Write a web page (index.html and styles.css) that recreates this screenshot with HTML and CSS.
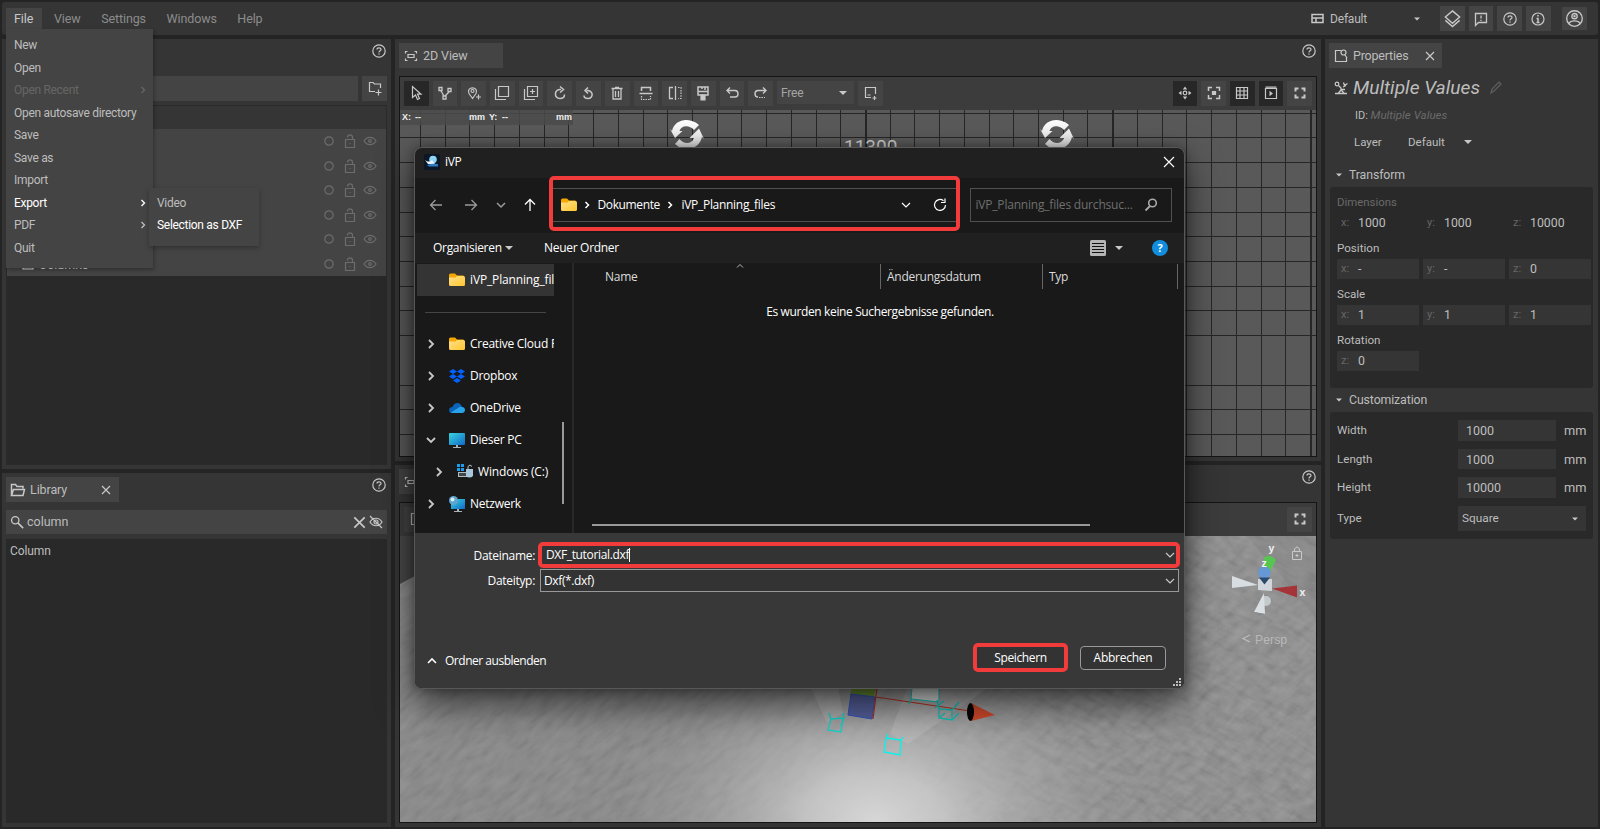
FILE: index.html
```html
<!DOCTYPE html>
<html lang="de">
<head>
<meta charset="utf-8">
<title>iVP</title>
<link rel="stylesheet" href="styles.css">
</head>
<body>
<svg class="defs" width="0" height="0">
  <symbol id="help" viewBox="0 0 16 16"><circle cx="8" cy="8" r="6.2"/><path d="M6 6.6C6 4.2 10 4.2 10 6.5C10 7.9 8 7.8 8 9.4M8 10.6v1.2"/></symbol>
  <symbol id="close" viewBox="0 0 16 16"><path d="M4 4l8 8M12 4l-8 8"/></symbol>
  <symbol id="circle" viewBox="0 0 16 16"><circle cx="8" cy="8" r="4.2"/></symbol>
  <symbol id="lock" viewBox="0 0 16 16"><path d="M3.5 6.5h9v8h-9zM5.5 4.5C5.5 1 10.500 1 10.500 4.500V6.500M7.500 10.500h1"/></symbol>
  <symbol id="eye" viewBox="0 0 16 16"><path d="M2 8C5 3.200 11 3.200 14 8C11 12.800 5 12.800 2 8z"/><circle cx="8" cy="8" r="1.300"/></symbol>
  <symbol id="full" viewBox="0 0 16 16"><path stroke-width="2" d="M3.500 6.500v-3h3M9.500 3.500h3v3M12.500 9.500v3h-3M6.500 12.500h-3v-3"/></symbol>
  <symbol id="scan" viewBox="0 0 16 16"><path d="M2.500 5.500v-2h2M11.500 3.500h2v2M13.500 10.500v2h-2M4.500 12.500h-2v-2M5 6.500h6v3H5z"/></symbol>
  <symbol id="right" viewBox="0 0 16 16"><path d="M6 4l4 4-4 4"/></symbol>
  <symbol id="down" viewBox="0 0 16 16"><path d="M4 6l4 4 4-4"/></symbol>
  <symbol id="up" viewBox="0 0 16 16"><path d="M4 10l4-4 4 4"/></symbol>
  <symbol id="tri" viewBox="0 0 16 16"><path d="M4 6h8l-4 4z" fill="currentColor" stroke="none"/></symbol>
  <symbol id="folder" viewBox="0 0 16 16"><path d="M0 3q0-1.500 1.500-1.500H6L8 3.500h6.500V7H0z" fill="#f5a800" stroke="none"/><path d="M0 5.500h6.500L8 4h6.500Q16 4 16 5.500v7q0 1.500-1.500 1.500h-13Q0 14 0 12.500z" fill="url(#fg)" stroke="none"/></symbol>
  <symbol id="sync" viewBox="0 0 34 32"><path fill="url(#sg)" stroke="none" d="M2 12C4 3 13 -1 22 2Q26 3 29 6L24 11C19 5.500 11 6.500 9.500 12L12.500 12 5 19 0 10zM32 18C30 27 21 32 12 29Q8 28 5 25L9.500 20C14 26 22 25 24 19L19.500 19 29 9.500 34 20z"/></symbol>
  <linearGradient id="fg" x1="0" y1="0" x2="1" y2="1"><stop stop-color="#ffe08a"/><stop offset="1" stop-color="#ffc62e"/></linearGradient>
  <linearGradient id="sg" x1="0" y1="0" x2="0" y2="1"><stop stop-color="#fff"/><stop offset="1" stop-color="#d8d8d8"/></linearGradient>
  <linearGradient id="pc" x1="0" y1="0" x2="1" y2="1"><stop stop-color="#37d5dd"/><stop offset="1" stop-color="#1169c9"/></linearGradient>
</svg>

<header class="topbar">
  <nav class="menus"><span class="menu-open">File</span><span>View</span><span>Settings</span><span>Windows</span><span>Help</span></nav>
  <div class="topright">
    <svg class="ic i13" viewBox="0 0 13 13"><path d="M1 2.500h11v8H1zM1 6h11M5 6v4.500" stroke-width="1.500"/></svg>
    <span class="layout-name">Default</span>
    <svg class="ic i12 lay-arrow"><use href="#tri"/></svg>
    <span class="btn"><svg class="ic i19" viewBox="0 0 20 20"><path stroke-width="1.500" d="M10 2l7.500 6.500L10 15 2.500 8.500zM2.500 12L10 18.500 17.500 12"/></svg></span>
    <span class="btn"><svg class="ic" viewBox="0 0 16 16"><path d="M2.500 2.500h11v9h-8l-3 3zM8 4.500v3M8 8.700v1.300" stroke-width="1.300"/></svg></span>
    <span class="btn"><svg class="ic"><use href="#help"/></svg></span>
    <span class="btn"><svg class="ic" viewBox="0 0 16 16"><circle cx="8" cy="8" r="6"/><path d="M8 4v1.500M6.500 7.500H8V11M6.500 11.500h3" stroke-width="1.500"/></svg></span>
    <span class="btn user"><svg class="ic i19" viewBox="0 0 20 20"><g stroke-width="1.400"><circle cx="10" cy="10" r="8.200"/><circle cx="10" cy="7.500" r="2.800"/><circle cx="10" cy="7.500" r=".6"/><path d="M4 15.500C6 11.500 14 11.500 16 15.500"/></g></svg></span>
  </div>
</header>

<main class="main">
  <div class="col left">
    <section class="panel hier">
      <div class="tabs"><span></span><svg class="ic help"><use href="#help"/></svg></div>
      <div class="searchrow"><div class="field"></div><span class="btn"><svg class="ic" viewBox="0 0 16 16"><path d="M8 11.500H2.500v-9H6L7.500 4h6v4M11.500 9.500v6M8.500 12.500h6"/></svg></span></div>
      <div class="tree" id="tree"></div>
    </section>
    <section class="panel lib">
      <div class="tabs"><div class="tab libtab"><svg class="ic" viewBox="0 0 16 16"><path d="M1.500 13.500v-11h4l1.500 2h6v2M1.500 13.500l2-6h11l-1.500 6z" stroke-width="1.500"/></svg><span>Library</span><svg class="ic tabx"><use href="#close"/></svg></div><svg class="ic help"><use href="#help"/></svg></div>
      <div class="libsearch"><svg class="ic i14" viewBox="0 0 16 16"><circle cx="6" cy="6" r="4.200" stroke-width="1.500"/><path d="M9 9l6 6" stroke-width="1.800"/></svg><span>column</span><svg class="ic xbold" viewBox="0 0 18 18"><path d="M3.500 3.500l11 11M14.500 3.500l-11 11"/></svg><svg class="ic" viewBox="0 0 16 16"><path d="M2 8C5 3 11 3 14 8C11 13 5 13 2 8zM2 2l12 12"/><circle cx="8" cy="8" r="2"/></svg></div>
      <div class="liblist">Column</div>
    </section>
  </div>

  <div class="col center">
    <section class="panel v2d">
      <div class="tabs"><div class="tab viewtab"><svg class="ic"><use href="#scan"/></svg><span>2D View</span></div><svg class="ic help"><use href="#help"/></svg></div>
      <div class="view">
        <div class="tools">
          <span class="btn on"><svg class="ic" viewBox="0 0 16 16"><path d="M4.500 1.500v11l3-2.500 2 4.500 2-1-2-4.300h3.500z"/></svg></span>
          <span class="btn"><svg class="ic" viewBox="0 0 16 16"><path d="M2 2.500h3v3H2zM11 3.500h3v3h-3zM6 11h3v3H6zM4 6l3 5M12 7l-4 4" stroke-width="1.300"/></svg></span>
          <span class="btn"><svg class="ic" viewBox="0 0 16 16"><path d="M6.500 13.500L3 8.500C-.5 1 13.500 1 10 8.500zM12.500 9.500v5M10 12h5"/><circle cx="6.500" cy="6" r="1.500"/></svg></span>
          <span class="btn"><svg class="ic" viewBox="0 0 16 16"><path d="M4.500 1.500h10v10h-10zM1.500 4v10.500H12"/></svg></span>
          <span class="btn"><svg class="ic" viewBox="0 0 16 16"><path d="M4.500 1.500h10v10h-10zM1.500 4v10.500H12M9.500 4v5M7 6.500h5"/></svg></span>
          <span class="btn"><svg class="ic" viewBox="0 0 16 16"><path d="M9 4.500C2 3.500 1.500 13.500 8 13.500C11 13.500 12.500 11.500 12.500 9.500M8 1.500l3.500 3L8 7.500" stroke-width="1.500"/></svg></span>
          <span class="btn"><svg class="ic" viewBox="0 0 16 16"><path d="M6.500 5.500C14 5 13.500 13.500 8 13.500C5 13.500 4 12 4 10.500M8 2.500l-3 3 3 3" stroke-width="1.500"/></svg></span>
          <span class="btn"><svg class="ic" viewBox="0 0 16 16"><path d="M2.500 3.500h11M6 2.500h4M4 4v10h8V4M6.500 6v6M9.500 6v6" stroke-width="1.300"/></svg></span>
          <span class="btn"><svg class="ic" viewBox="0 0 16 16"><path d="M3.500 6V2.500h9V6M1.500 8.500h13" stroke-width="1.500"/><path d="M3.500 11v3.500h9V11" stroke-dasharray="1.500 1"/></svg></span>
          <span class="btn"><svg class="ic" viewBox="0 0 16 16"><path d="M6 2.500H2.500v11H6M8.500 1v14" stroke-width="1.300"/><path d="M11 2.500h3v11h-3" stroke-dasharray="1.500 1.200"/></svg></span>
          <span class="btn"><svg class="ic" viewBox="0 0 16 16"><path d="M3 2v8h10V2zM3 6.500h10M7 2v2M10 2v3" stroke-width="1.500"/><path d="M6 10h4v5H6z" fill="currentColor"/></svg></span>
          <span class="btn"><svg class="ic" viewBox="0 0 16 16"><path d="M3 5.500h8C15 5.500 15 12 11 12H6M6 2.500l-3 3 3 3" stroke-width="1.400"/></svg></span>
          <span class="btn"><svg class="ic" viewBox="0 0 16 16"><path d="M13 5.500H5C1 5.500 1 12 5 12M10 2.500l3 3-3 3" stroke-width="1.400"/><path d="M6 12.500h6" stroke-dasharray="1.500 1"/></svg></span>
          <span class="select">Free<svg class="ic"><use href="#tri"/></svg></span>
          <span class="btn"><svg class="ic" viewBox="0 0 16 16"><path d="M9 12.500H3.500v-10h10V9M5.500 10h3M12.500 11v4M10.500 13h4"/></svg></span>
          <span class="spacer"></span>
          <span class="btn on"><svg class="ic" viewBox="0 0 16 16"><circle cx="8" cy="8" r="1.800"/><path fill="currentColor" stroke="none" d="M8 1.500L10.200 4.500H5.800zM8 14.500l2.200-3H5.800zM1.500 8l3-2.200v4.400zM14.500 8l-3-2.200v4.400z"/></svg></span>
          <span class="btn"><svg class="ic" viewBox="0 0 16 16"><path d="M2.500 6V2.500H6M10 2.500h3.500V6M13.500 10v3.500H10M6 13.500H2.500V10" stroke-width="1.500"/><path d="M6.500 6.500h3v3h-3z" fill="currentColor"/></svg></span>
          <span class="btn on"><svg class="ic" viewBox="0 0 16 16"><path d="M2.500 2.500h11v11h-11zM2.500 6h11M2.500 10h11M6 2.500v11M10 2.500v11" stroke-width="1.200"/></svg></span>
          <span class="btn on"><svg class="ic" viewBox="0 0 16 16"><path d="M2.500 3.500h11v10h-11zM2.500 2.200h11"/><path d="M6.500 5.800l3.500 2.700-3.500 2.700z" fill="currentColor" stroke="none"/></svg></span>
          <span class="btn"><svg class="ic"><use href="#full"/></svg></span>
        </div>
        <div class="canvas2d">
          <svg class="grid" id="grid" width="916" height="346"></svg>
          <div class="coords"><span>X:</span><span>--</span><span>mm</span><span>Y:</span><span>--</span><span>mm</span></div>
          <svg class="sync s1"><use href="#sync"/></svg>
          <svg class="sync s2"><use href="#sync"/></svg>
          <span class="measure">11300</span>
        </div>
      </div>
    </section>
    <section class="panel v3d">
      <div class="tabs"><div class="tab viewtab"><svg class="ic"><use href="#scan"/></svg><span>3D View</span></div><svg class="ic help"><use href="#help"/></svg></div>
      <div class="view">
        <div class="tools"><span class="btn"><svg class="ic" viewBox="0 0 16 16"><path d="M3.500 2.500h9v11h-9zM6 8h4"/></svg></span><span class="spacer"></span><span class="btn"><svg class="ic"><use href="#full"/></svg></span></div>
        <svg class="scene" viewBox="400 536 916 286" width="916" height="286">
          <defs>
            <filter id="noise" x="0" y="0" width="1" height="1"><feTurbulence type="fractalNoise" baseFrequency=".05 .15" numOctaves="4" seed="4"/><feColorMatrix values="1 0 0 0 0  1 0 0 0 0  1 0 0 0 0  0 0 0 0 1"/></filter>
            <radialGradient id="glow" gradientUnits="userSpaceOnUse" cx="0" cy="0" r="1" gradientTransform="translate(875 820) scale(270 185)"><stop stop-color="#d6d6d6"/><stop offset=".25" stop-color="#cdcdcd" stop-opacity=".85"/><stop offset=".6" stop-color="#b4b4b4" stop-opacity=".45"/><stop offset="1" stop-color="#999" stop-opacity="0"/></radialGradient>
            <linearGradient id="fade" x1="0" x2="1" y1="0" y2="0"><stop offset=".35" stop-color="#fff" stop-opacity="0"/><stop offset=".65" stop-color="#fff"/></linearGradient>
            <mask id="rightside"><rect x="400" y="536" width="916" height="286" fill="url(#fade)"/></mask>
          </defs>
          <rect x="400" y="536" width="916" height="286" fill="#858485"/>
          <g opacity=".13"><rect x="100" y="300" width="1100" height="900" filter="url(#noise)" transform="rotate(-40 650 680)"/></g>
          <g opacity=".13" mask="url(#rightside)"><rect x="700" y="200" width="900" height="900" filter="url(#noise)" transform="rotate(28 1150 680)"/></g>
          <rect x="400" y="536" width="916" height="286" fill="url(#glow)"/>
          <path d="M400 536h90l-90 48z" fill="#484848"/>
          <g fill="#d8d8d8" fill-opacity=".22"><path d="M811 688h27l5 25-16 10z"/><path d="M907 688h81l-80 56-18-10z"/></g>
          <path d="M852 688h24l-2 9-24-3z" fill="#6f9436"/><path d="M851 694l24 3-3 22-24-4z" fill="#55609a" stroke="#2f55c4"/><path d="M877 688l-4 31M876 697l94 14" stroke="#b8321f" fill="none" stroke-width="1.200"/>
          <path d="M912 688h27v14l-28-3z" fill="#e0e2e2" stroke="#14c4bf"/>
          <g fill="none" stroke-width="1.300"><path stroke="#12d4ca" d="M829 713l2 6 12-1-2 14-13-2 3-11M843 713l1 5-3 8"/><path stroke="#00f6ee" d="M888 734l-2 5-2 13 16 3 1-15-15-2M901 740l2-3"/><path stroke="#10c4bc" d="M911 699l-2 5M937 700l2 9 13 1 7-8M939 709v9l13 2v-11M952 720l7-7M935 708l9-7M939 718l6-5"/></g>
          <path d="M971 703l24 12-24 6z" fill="#d14a2b"/><ellipse cx="970.500" cy="712" rx="3.500" ry="9" fill="#050303"/>
          <g stroke="none"><path d="M1264 557q8-3 12 3l-6 12-6-3z" fill="#57c552"/><path d="M1232 576l26 9-26 3z" fill="#d7dde1"/><circle cx="1266" cy="601" r="5" fill="#c4c9cc"/><path d="M1264 593l-10 19 11 2z" fill="#d9dfe2"/><path d="M1254 612l11 2-5 1.500z" fill="#828a8e"/><path d="M1258 579h14v12l-14-1z" fill="#d0d6db"/><path d="M1272 588.500l25-3v12z" fill="#a53438"/><circle cx="1264.300" cy="572.500" r="6.300" fill="#6598d5"/><path d="M1259 577.500h11l-5.500 7z" fill="#2b4a6c"/></g>
          <g fill="#f2f2f2" font-family="Liberation Sans" font-weight="bold" font-size="10.500"><text x="1268.500" y="552">y</text><text x="1261.500" y="567">z</text><text x="1299.500" y="596">x</text></g>
          <path d="M1292.500 551.500h9v8h-9zM1294.500 551v-2q2.500-4 5 0v2M1295.500 555.500h3M1297 554v3" fill="none" stroke="#c9c9c9"/>
          <path d="M1250 635l-7 3.500 7 3.500" fill="none" stroke="#bdbdbd" stroke-width="1.300"/><text x="1255" y="644" fill="#b9b9b9" font-family="Liberation Sans" font-size="12.300">Persp</text>
        </svg>
      </div>
    </section>
  </div>

  <section class="panel props">
    <div class="tabs"><div class="tab proptab"><svg class="ic" viewBox="0 0 16 16"><path d="M8 2.500H2.500v11h11V9M12 7l2 3"/><circle cx="10.500" cy="4.500" r="2.500"/></svg><span>Properties</span><svg class="ic tabx"><use href="#close"/></svg></div></div>
    <div class="ptitle"><svg class="ic i14" viewBox="0 0 14 14"><path d="M1 12.500h12M4.500 12L7 9M10 12L7 9V7L4.500 4.500M9 6l3-1.500M9.500 1.500l1 3 3-2M7 8.500h4" stroke-width="1.300"/><circle cx="3" cy="3" r="1.800"/></svg><i>Multiple Values</i><svg class="ic pencil" viewBox="0 0 16 16"><path d="M3 13l1-4 7-7 2 2-7 7z"/></svg></div>
    <div class="pid">ID: <i>Multiple Values</i></div>
    <div class="player"><span>Layer</span><span>Default</span><svg class="ic"><use href="#tri"/></svg></div>
    <div class="phead"><svg class="ic i12"><use href="#tri"/></svg>Transform</div>
    <div class="box transform">
      <div class="lab dim">Dimensions</div>
      <div class="trio plain"><div><b>x:</b>1000</div><div><b>y:</b>1000</div><div><b>z:</b>10000</div></div>
      <div class="lab">Position</div>
      <div class="trio"><div><b>x:</b>-</div><div><b>y:</b>-</div><div><b>z:</b>0</div></div>
      <div class="lab">Scale</div>
      <div class="trio"><div><b>x:</b>1</div><div><b>y:</b>1</div><div><b>z:</b>1</div></div>
      <div class="lab">Rotation</div>
      <div class="trio"><div><b>z:</b>0</div></div>
    </div>
    <div class="phead ch"><svg class="ic i12"><use href="#tri"/></svg>Customization</div>
    <div class="box custom">
      <div class="crow"><span>Width</span><div>1000</div><em>mm</em></div>
      <div class="crow"><span>Length</span><div>1000</div><em>mm</em></div>
      <div class="crow"><span>Height</span><div>10000</div><em>mm</em></div>
      <div class="crow type"><span>Type</span><div>Square<svg class="ic i12"><use href="#tri"/></svg></div></div>
    </div>
  </section>
</main>

<div class="filemenu">
  <div>New</div><div>Open</div><div class="off">Open Recent<svg class="ic i12"><use href="#right"/></svg></div><div>Open autosave directory</div><div>Save</div><div>Save as</div><div>Import</div><div class="hot">Export<svg class="ic i12"><use href="#right"/></svg></div><div>PDF<svg class="ic i12"><use href="#right"/></svg></div><div>Quit</div>
</div>
<div class="submenu"><div>Video</div><div class="hot">Selection as DXF</div></div>

<div class="dialog">
  <div class="dtitle"><svg width="16" height="16" viewBox="0 0 16 16"><rect width="16" height="16" rx="2" fill="#0b1626"/><circle cx="9" cy="5.500" r="3.800" fill="#8ed4f5"/><path d="M1 6q4 3 7 0l3 4H4z" fill="#e6f4fb"/><path d="M3 11q5-2 11-1v2.500H5z" fill="#2f7ac0"/></svg><span>iVP</span><svg class="ic dx"><use href="#close"/></svg></div>
  <div class="dnav">
    <svg class="ic dim" viewBox="0 0 16 16"><path d="M14 8H2.500M7.500 3l-5 5 5 5" stroke-width="1.300"/></svg>
    <svg class="ic dim" viewBox="0 0 16 16"><path d="M2 8h11.500M8.500 3l5 5-5 5" stroke-width="1.300"/></svg>
    <svg class="ic dim"><use href="#down"/></svg>
    <svg class="ic white" viewBox="0 0 16 16"><path d="M8 14V2.500M3 7.500l5-5 5 5" stroke-width="1.300"/></svg>
    <div class="mark addr"><div class="addrin"><svg width="16" height="16"><use href="#folder"/></svg><svg class="ic i12 white bold"><use href="#right"/></svg><span class="a1">Dokumente</span><svg class="ic i12 white bold"><use href="#right"/></svg><span class="a2">iVP_Planning_files</span><svg class="ic white ad"><use href="#down"/></svg><svg class="ic white" viewBox="0 0 16 16"><path d="M13.500 8a5.500 5.500 0 1 1-2-4.300M13 1.500v4H9" stroke-width="1.200"/></svg></div></div>
    <div class="dsearch"><span>iVP_Planning_files durchsuc...</span><svg class="ic" viewBox="0 0 16 16"><circle cx="9.500" cy="6" r="3.800" stroke-width="1.600"/><path d="M7 9l-4.500 4.500" stroke-width="1.800"/></svg></div>
  </div>
  <div class="dbar"><span class="t-org">Organisieren</span><svg class="ic"><use href="#tri"/></svg><span class="neu">Neuer Ordner</span><svg class="lines" width="16" height="16" viewBox="0 0 16 16"><rect width="16" height="16" rx="1.500" fill="#b5b5b5"/><path d="M2 3.500h12M2 6.500h12M2 9.500h12M2 12.500h12" stroke="#111"/></svg><svg class="ic vt"><use href="#tri"/></svg><b class="qm">?</b></div>
  <div class="dbody">
    <div class="side">
      <div class="node sel"><svg width="16" height="16"><use href="#folder"/></svg><span>iVP_Planning_fil</span></div>
      <div class="sep"></div>
      <div class="node"><svg class="ic ch"><use href="#right"/></svg><svg width="16" height="16"><use href="#folder"/></svg><span>Creative Cloud F</span></div>
      <div class="node"><svg class="ic ch"><use href="#right"/></svg><svg width="16" height="16" viewBox="0 0 16 16"><path fill="#0061fe" d="M4 1l4 2.500L4 6 0 3.500zM12 1l4 2.500L12 6 8 3.500zM4 6l4 2.500L4 11 0 8.500zM12 6l4 2.500L12 11 8 8.500zM8 10l4 2.500L8 15l-4-2.500z"/></svg><span>Dropbox</span></div>
      <div class="node"><svg class="ic ch"><use href="#right"/></svg><svg width="16" height="16" viewBox="0 0 16 16"><path fill="#0b62b8" d="M3 13C-1 13-1 7 3.500 7C5 1.500 12 1.500 13 7L8 13z"/><path fill="#28a3ea" d="M2 12.500L9 8q2-2 4-1C17 7 17 13 13 13H3z"/></svg><span>OneDrive</span></div>
      <div class="node"><svg class="ic ch"><use href="#down"/></svg><svg width="16" height="16" viewBox="0 0 16 16"><rect y="1" width="16" height="12" rx="1" fill="url(#pc)"/><path fill="#a9b2b8" d="M7 13h2v2h3v1H4v-1h3z"/></svg><span>Dieser PC</span></div>
      <div class="node sub"><svg class="ic ch"><use href="#right"/></svg><svg width="16" height="16" viewBox="0 0 16 16"><path fill="#1d9df0" d="M0 0h3v3H0zM4 0h3v3H4zM0 4h3v3H0zM4 4h3v3H4z"/><path fill="#b5bcc0" d="M1 8h14v5H1z"/><path fill="#40474b" d="M2 9h7v3H2z"/><path fill="#a8c6dc" d="M9 5h7v7q-3.500 3-7 0z"/><path stroke="#b9c2c8" fill="none" d="M11 5V2.500q2-3 4 0"/></svg><span>Windows (C:)</span></div>
      <div class="node"><svg class="ic ch"><use href="#right"/></svg><svg width="16" height="16" viewBox="0 0 16 16"><rect x="2" y="3" width="14" height="10" fill="url(#pc)"/><path fill="#a9b2b8" d="M8 13h2v2h3v1H5v-1h3z"/><circle cx="4.500" cy="4.500" r="4.500" fill="#5fa5cf"/><circle cx="3.500" cy="3.500" r="2" fill="#d8edf8"/></svg><span>Netzwerk</span></div>
      <i class="vbar"></i>
    </div>
    <div class="files">
      <div class="fhead"><span class="c1">Name<svg class="ic i12 sort"><use href="#up"/></svg></span><span class="c2">Änderungsdatum</span><span class="c3">Typ</span></div>
      <div class="empty">Es wurden keine Suchergebnisse gefunden.</div>
      <i class="hbar"></i>
    </div>
  </div>
  <div class="dfoot">
    <div class="frow"><label>Dateiname:</label><div class="mark fname"><span class="caret">DXF_tutorial.dxf</span><svg class="ic"><use href="#down"/></svg></div></div>
    <div class="frow r2"><label>Dateityp:</label><div class="ftype"><span>Dxf(*.dxf)</span><svg class="ic"><use href="#down"/></svg></div></div>
    <div class="actions"><svg class="ic white"><use href="#up"/></svg><span class="hide">Ordner ausblenden</span><div class="mark save">Speichern</div><div class="cancel">Abbrechen</div></div>
    <svg class="grip" width="9" height="9" viewBox="0 0 9 9"><path fill="#bbb" d="M6 0h2v2H6zM3 3h2v2H3zM6 3h2v2H6zM0 6h2v2H0zM3 6h2v2H3zM6 6h2v2H6z"/></svg>
  </div>
</div>
<script src="script.js"></script>
</body>
</html>
```

FILE: styles.css
```css
* { box-sizing: border-box; }
body { margin: 0; width: 1600px; height: 829px; overflow: hidden; background: #242424; color: #bdbdbd; font: 12px/16px Roboto, sans-serif; padding: 2px; display: flex; flex-direction: column; gap: 4px; position: relative; }
.defs { position: absolute; }
.ic { width: 16px; height: 16px; flex: none; fill: none; stroke: currentColor; stroke-width: 1.2; color: #c8c8c8; display: block; }
.i12 { width: 12px; height: 12px; }
.i13 { width: 13px; height: 13px; }
.i14 { width: 14px; height: 14px; }
.i19 { width: 19px; height: 19px; }
.btn { width: 24.7px; height: 24.5px; background: #444; display: flex; align-items: center; justify-content: center; flex: none; }
.btn.on { background: #272727; }
.spacer { flex: 1; }

.topbar { height: 33px; flex: none; background: #353535; border-radius: 3px; display: flex; justify-content: space-between; padding-left: 4px; }
.menus { display: flex; padding-top: 6px; font-size: 12.500px; color: #8c8c8c; letter-spacing: -.1px; }
.menus span { height: 21px; line-height: 21px; margin-right: 20.500px; }
.menus .menu-open { background: #444; color: #c8c8c8; width: 36px; padding-left: 8px; margin-right: 12px; }
.topright { display: flex; align-items: center; gap: 4px; padding-right: 11px; }
.layout-name { margin-left: 2px; width: 77px; letter-spacing: -.2px; }
.lay-arrow { margin-right: 13px; }
.btn.user { margin-left: 7.500px; height: 23px; }

.main { flex: 1; display: grid; grid-template-columns: 389px 926px 273px; gap: 4px; min-height: 0; }
.col { display: grid; gap: 4px; min-height: 0; }
.left { grid-template-rows: 430px 354px; }
.center { grid-template-rows: 422px 362px; }
.panel { background: #353535; padding: 4px; display: flex; flex-direction: column; min-height: 0; overflow: hidden; }
.tabs { height: 25px; flex: none; display: flex; justify-content: space-between; }
.tab { background: #444; height: 25px; display: flex; align-items: center; font-size: 12.500px; letter-spacing: -.1px; }

.hier .searchrow { display: flex; gap: 4px; margin-top: 8px; }
.field { flex: 1; background: #444; }
.tree { margin-top: 4px; flex: 1; background: #292929; border: 1px solid #2a2a2a; }
.troot { height: 23.500px; background: #353535; }
.trow { height: 24.500px; background: #444; display: flex; align-items: center; justify-content: flex-end; gap: 4.500px; padding-right: 8px; }
.trow .ic { color: #6c6c6c; }
.trow .tname { margin-right: auto; display: flex; align-items: center; gap: 5px; padding: 3px 0 0 15px; color: #ddd; font-size: 12.500px; }
.trow .tname .ic { color: #ddd; width: 12px; }
.libtab { width: 113px; padding-left: 4px; }
.libtab span { margin-left: 4px; flex: 1; }
.libtab .tabx { margin-right: 5px; }
.libsearch { height: 24px; margin-top: 8px; background: #444; display: flex; align-items: center; padding: 0 3px 0 4px; font-size: 12.500px; flex: none; }
.libsearch span { margin-left: 3px; flex: 1; }
.xbold { stroke-width: 1.8; width: 17px; height: 17px; }
.liblist { margin-top: 5px; flex: 1; background: #292929; padding: 4px; letter-spacing: -.1px; }

.viewtab { width: 104px; padding-left: 4px; }
.viewtab span { margin-left: 4px; }
.view { margin-top: 8px; flex: 1; min-height: 0; border: 1px solid #151515; display: flex; flex-direction: column; }
.tools { height: 33px; flex: none; background: #3c3c3c; display: flex; gap: 4px; padding: 4px 4px 0; }
.select { width: 77px; height: 23px; background: #444; display: flex; align-items: center; justify-content: space-between; padding: 0 3px 0 4px; color: #a5a5a5; letter-spacing: -.2px; }
.canvas2d { position: relative; flex: 1; background: #595959; overflow: hidden; }
.grid { position: absolute; left: 0; top: 0; }
.coords { position: absolute; left: 0; top: 0; width: 173px; height: 15px; background: rgba(75,75,75,.85); color: #eee; font: bold 9px/14px "Liberation Sans", sans-serif; display: grid; grid-template-columns: 13px 54px 20px 13px 54px 18px; padding-left: 2px; }
.sync { position: absolute; width: 34px; height: 32px; top: 9px; }
.s1 { left: 269.5px; }
.s2 { left: 639.5px; }
.measure { position: absolute; left: 444px; top: 26px; font: 19px/22px Roboto, sans-serif; color: #d0d0d0; }
.scene { display: block; }

.proptab { width: 113px; padding-left: 4px; }
.proptab span { margin-left: 4px; flex: 1; letter-spacing: -.2px; }
.proptab .tabx { margin-right: 4px; }
.ptitle { margin-top: 8px; height: 24px; display: flex; align-items: center; padding-left: 5px; }
.ptitle i { font-size: 19.200px; margin-left: 5px; }
.pencil { margin-left: 8px; color: #606060; }
.pid { margin-top: 7px; height: 17px; padding-left: 26px; font-size: 11px; white-space: nowrap; }
.pid i { color: #6b6b6b; font-size: 11.600px; }
.player { margin-top: 10px; height: 16px; display: flex; padding-left: 25px; font-size: 11.500px; }
.player span:first-child { width: 54px; }
.player .ic { margin-left: 15px; }
.phead { margin-top: 17px; height: 16px; display: flex; align-items: center; gap: 4px; padding-left: 4px; font-size: 12.300px; letter-spacing: -.1px; }
.box { background: #292929; border-radius: 3px; margin: 4px 1px 0; padding: 0 2px 0 7px; font-size: 11.600px; }
.transform { height: 201px; padding-top: 7px; }
.lab { height: 16px; }
.lab.dim { color: #6a6a6a; font-size: 11.400px; }
.trio { display: flex; gap: 4px; margin: 3px 0 7px; }
.trio div { width: 82px; height: 20px; line-height: 20px; background: #353535; padding-left: 4px; font-size: 12.300px; display: flex; flex: none; }
.trio b { font-weight: normal; font-size: 11px; color: #666; width: 17px; }
.transform .plain div { background: none; }
.ch.phead { margin-top: 4px; }
.custom { height: 127px; padding-top: 8px; }
.crow { display: flex; height: 20.500px; margin-bottom: 8.200px; line-height: 21px; }
.crow span { width: 121px; }
.crow div { width: 98px; background: #353535; padding-left: 8px; font-size: 12.500px; }
.crow em { font-style: normal; font-size: 12.800px; margin-left: 8px; }
.crow.type { height: 25px; line-height: 25px; }
.crow.type div { width: 128px; padding: 0 5px 0 4px; display: flex; justify-content: space-between; align-items: center; font-size: 11.800px; }

.filemenu { position: absolute; left: 6px; top: 29px; width: 147px; height: 239px; background: #444; padding-top: 5px; box-shadow: 1px 2px 4px rgba(0,0,0,.3); }
.filemenu div, .submenu div { height: 22.500px; line-height: 22.500px; padding: 0 4px 0 8px; display: flex; justify-content: space-between; align-items: center; font-size: 12px; letter-spacing: -.3px; color: #bdbdbd; white-space: nowrap; }
.filemenu .ic { stroke-width: 1.800; color: inherit; }
.filemenu .off { color: #666; }
.filemenu .hot, .submenu .hot { color: #fff; }
.submenu { position: absolute; left: 149px; top: 188px; width: 110px; height: 58px; background: #444; padding-top: 3.500px; box-shadow: 0 2px 5px rgba(0,0,0,.28); }

.dialog { position: absolute; left: 414px; top: 147px; width: 771px; height: 542px; padding-top: 1px; border: 1px solid #585858; border-radius: 8px; overflow: hidden; background: #202020; box-shadow: 0 16px 36px rgba(0,0,0,.6), 0 0 12px rgba(0,0,0,.35); font: 12px/16px "Open Sans", "Noto Sans", sans-serif; letter-spacing: -.37px; color: #fff; display: flex; flex-direction: column; }
.white { color: #fff; }
.mark { border: 4px solid #f23b3b; border-radius: 5px; }
.dtitle { height: 29px; display: flex; align-items: center; padding: 0 0 3px 9px; flex: none; }
.dtitle span { margin-left: 5px; flex: 1; }
.dx { color: #fff; margin-right: 5px; width: 20px; height: 20px; stroke-width: .9; }
.dnav { height: 55px; background: #191919; display: flex; align-items: center; flex: none; padding-left: 13px; }
.dnav > .ic { margin-right: 18.500px; position: relative; top: -1px; }
.dnav > .ic:nth-child(3) { margin: 0 12.500px 0 -4px; stroke-width: 1.5; }
.dnav > .ic:nth-child(4) { margin-right: 11px; }
.dnav .dim { color: #9a9a9a; }
.addr { width: 411px; height: 55px; flex: none; margin-top: -4px; display: flex; align-items: center; }
.addrin { flex: 1; height: 34px; margin-top: 2px; border: solid #505050; border-width: 1px 0; display: flex; align-items: center; padding: 0 8px; }
.bold { stroke-width: 2; }
.addrin .i12 { margin: 0 6px 0 4px; }
.addrin .a2 { flex: 1; letter-spacing: -.3px; }
.addrin .a1 { width: 62px; margin-left: -1px; }
.addrin .ad { margin-right: 18px; }
.dsearch { width: 202px; height: 34px; margin: -1px 0 0 10px; border: 1px solid #505050; display: flex; align-items: center; justify-content: space-between; padding: 0 12px 0 5px; color: #6f6f6f; letter-spacing: -.2px; }
.dsearch .ic { color: #aaa; }
.dbar { height: 30px; background: #202020; display: flex; align-items: center; padding-left: 18px; flex: none; letter-spacing: -.3px; }
.t-org { width: 68px; }
.neu { margin-left: 27px; flex: 1; }
.lines { margin-right: 2px; }
.vt { margin: 0 25px 0 3px; }
.qm { width: 16px; height: 16px; border-radius: 8px; background: #128ddd; text-align: center; font-size: 11px; line-height: 16px; margin-right: 16px; }
.dbody { height: 270px; display: flex; flex: none; background: #191919; }
.side { width: 159px; border-right: 2px solid #282828; position: relative; padding: 1px 18px 0 2px; }
.node { height: 32px; display: flex; align-items: center; overflow: hidden; white-space: nowrap; padding-left: 6px; letter-spacing: -.25px; }
.node svg { flex: none; }
.node span { margin-left: 5px; }
.node .ch { margin-right: 10px; stroke-width: 1.800; }
.node.sub { padding-left: 14px; letter-spacing: -.15px; }
.sel { background: #343434; }
.node.sel { padding-left: 32px; letter-spacing: -.15px; }
.sep { height: 1px; background: #454545; margin: 16px 8px 15px; }
.vbar { position: absolute; right: 8px; top: 159px; width: 2px; height: 82px; background: #999; }
.files { flex: 1; position: relative; }
.fhead { display: flex; height: 26px; padding-top: 1px; line-height: 26px; color: #dcdcdc; letter-spacing: -.27px; }
.c1 { width: 307px; padding-left: 31px; border-right: 1px solid #666; position: relative; }
.sort { position: absolute; left: 160px; top: -4px; }
.c2 { width: 162px; padding-left: 6px; border-right: 1px solid #666; }
.c3 { width: 135px; padding-left: 6px; border-right: 1px solid #666; }
.empty { text-align: center; padding: 15px 0 0 2px; }
.hbar { position: absolute; left: 18px; bottom: 7px; width: 498px; height: 2px; background: #999; }
.dfoot { flex: 1; background: #383838; padding-top: 9px; position: relative; }
.frow { display: flex; align-items: center; height: 26px; }
.frow label { width: 120px; text-align: right; margin-right: 3px; letter-spacing: -.3px; padding-top: 1px; }
.fname { width: 642px; height: 26px; background: #333; display: flex; align-items: center; justify-content: space-between; padding: 0 0 0 4px; letter-spacing: -.35px; }
.fname .ic { margin-right: -2px; }
.caret { border-right: 1px solid #fff; line-height: 14px; }
.r2 { margin-top: 1px; height: 23px; }
.r2 label { margin-right: 5px; }
.ftype { width: 639px; height: 23px; border: 1px solid #999; background: #333; display: flex; align-items: center; justify-content: space-between; padding: 0 0 0 3px; }
.actions { margin-top: 50px; height: 30px; display: flex; align-items: center; padding-left: 9px; }
.hide { margin-left: 5px; flex: 1; letter-spacing: -.48px; }
.actions > .ic, .hide { position: relative; top: 4px; stroke-width: 1.6; }
.save { width: 95px; height: 29px; text-align: center; line-height: 21px; background: #333; }
.cancel { width: 86px; height: 24px; margin: 1px 18px 0 12px; border: 1px solid #999; border-radius: 4px; text-align: center; line-height: 21px; background: #333; letter-spacing: -.25px; }
.grip { position: absolute; right: 2px; bottom: 1px; }
```

FILE: script.js
```js
// Grid lines of the 2D view
const step = 24.72;
const grid = document.getElementById('grid');
let lines = '';
for (let k = -18; k <= 18; k++) {
  const x = Math.round(465 + step * k);
  lines += `<rect x="${x}" y="0" width="${k === 0 || k === 10 ? 2 : 1}" height="346" fill="#262626"/>`;
}
for (let k = -6; k <= 7; k++) {
  if (k === 4) continue;
  const y = Math.round(151 + step * k);
  lines += `<rect x="0" y="${y}" width="916" height="1" fill="#262626"/>`;
}
lines += '<rect x="911" y="0" width="1" height="346" fill="#262626"/>';
grid.innerHTML = lines;

// Rows of the object tree
const icon = n => `<svg class="ic"><use href="#${n}"/></svg>`;
let rows = '<div class="troot"></div>';
for (let i = 0; i < 6; i++) {
  const name = i === 5 ? `<span class="tname"><svg class="ic" viewBox="0 0 12 16"><path d="M1 5h10v7H1z"/></svg>Columns</span>` : '';
  rows += `<div class="trow">${name}${icon('circle')}${icon('lock')}${icon('eye')}</div>`;
}
document.getElementById('tree').innerHTML = rows;
```
